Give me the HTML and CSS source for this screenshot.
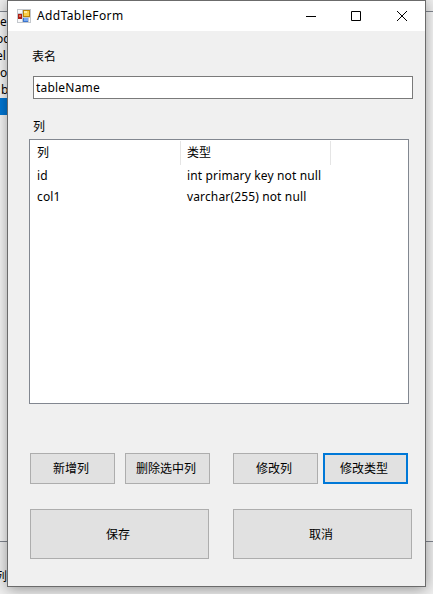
FILE: index.html
```
<!DOCTYPE html>
<html lang="zh-CN">
<head>
<meta charset="utf-8">
<title>AddTableForm</title>
<link rel="stylesheet" href="styles.css">
</head>
<body>
<div class="desktop">
  <div class="back-head"></div>
  <div class="back-body">
    <ul class="tree"><li>e</li><li class="outdent">oc</li><li class="outdent">el</li><li>o</li><li class="indent">b</li><li class="selected"></li></ul>
  </div>
  <div class="back-foot">列</div>
</div>
<main class="window">
  <header class="titlebar">
    <svg class="app-icon" width="14" height="14" viewBox="0 0 14 14" shape-rendering="crispEdges">
      <path fill="#c3c7cc" d="M0 0h14v14H0z"/>
      <path fill="#f7f8fa" d="M1 1h4v3H1zM1 10h4v3H1zM12 9h1v4h-1z"/>
      <path fill="#a91f16" d="M1 5h4v5H1z"/><path fill="#e46a57" d="M2 6h2v2H2z"/>
      <path fill="#ba8508" d="M6 1h7v7H6z"/><path fill="#f9cf47" d="M7 2h5v5H7z"/><path fill="#ffeaa0" d="M7 2h3v2H7z"/>
      <path fill="#3a74cd" d="M6 9h5v4H6z"/><path fill="#76a9f4" d="M7 9h4v3H7z"/>
    </svg>
    <h1 class="title">AddTableForm</h1>
    <svg class="controls" width="104" height="12" viewBox="0 0 104 12" fill="none" stroke="#000">
      <path d="M0 5.500h10M45.500 .5h9v9h-9z"/>
      <path d="M91 0l10 10M101 0l-10 10"/>
    </svg>
  </header>
  <form class="form">
    <label class="label" for="name">表名</label>
    <input class="name" id="name" value="tableName" spellcheck="false">
    <div class="label list-label">列</div>
    <div class="list">
      <div class="row head"><span>列</span><span>类型</span></div>
      <div class="row"><span>id</span><span>int primary key not null</span></div>
      <div class="row"><span>col1</span><span>varchar(255) not null</span></div>
    </div>
    <div class="actions">
      <button type="button">新增列</button>
      <button type="button">删除选中列</button>
      <button type="button">修改列</button>
      <button type="button" class="focused">修改类型</button>
    </div>
    <div class="submit">
      <button type="button">保存</button>
      <button type="button">取消</button>
    </div>
  </form>
</main>
</body>
</html>
```
FILE: styles.css
```
* { box-sizing: border-box; }
body {
  margin: 0;
  width: 433px;
  height: 594px;
  overflow: hidden;
  position: relative;
  color: #000;
  font: 12px/16px "Noto Sans", "Noto Sans CJK SC", sans-serif;
}
.desktop {
  position: absolute;
  inset: 0;
  display: flex;
  flex-direction: column;
  background: #f0f0f0;
}
.back-head { height: 12px; border-bottom: 1px solid #828790; }
.back-body { height: 530px; background: #f8f8f8; border-bottom: 1px solid #828790; }
.back-foot { flex: 1; padding-top: 27px; text-indent: -5px; }
.tree { width: 8px; margin: 0; padding: 1px 0 0; list-style: none; }
.tree li { height: 17px; line-height: 17px; white-space: nowrap; }
.tree .indent { text-indent: 1px; }
.tree .outdent { text-indent: -4px; }
.tree .selected { background: #0078d7; }
.window {
  position: relative;
  width: 419px;
  height: 587px;
  margin-left: 7px;
  border: 1px solid #6b6b6b;
  background: #f0f0f0;
  box-shadow: 0 2px 14px rgba(0, 0, 0, .4);
}
.titlebar {
  display: flex;
  align-items: center;
  height: 30px;
  padding: 0 13px 0 9px;
  background: #fff;
}
.title { margin: 0 auto 0 6px; font-size: 12px; font-weight: 400; letter-spacing: .4px; }
.controls { margin-top: 1px; margin-right: 2px; }
.form { padding: 18px 12px 0 21px; }
.label { display: block; padding-left: 3px; }
.name {
  display: block;
  width: 380px;
  height: 23px;
  margin: 11px 0 0 4px;
  padding: 0 2px;
  border: 1px solid #7a7a7a;
  background: #fff;
  color: #000;
  font: inherit;
  letter-spacing: .2px;
  outline: 0;
}
.list-label { margin-top: 20px; padding-left: 4px; }
.list {
  width: 380px;
  height: 265px;
  margin-top: 4px;
  padding-top: 1px;
  border: 1px solid #828790;
  background: #fff;
}
.row { display: grid; grid-template-columns: 151px 150px; height: 21px; line-height: 21px; letter-spacing: .14px; }
.row span { padding-left: 7px; white-space: nowrap; }
.row span + span { padding-left: 6px; }
.head { height: 24px; line-height: 24px; letter-spacing: 0; }
.head span { border-right: 1px solid #e5e5e5; }
.actions, .submit { display: grid; margin-left: 1px; }
.actions { grid-template-columns: 85px 85px 85px 85px; column-gap: 10px; height: 31px; margin-top: 49px; }
.actions button:nth-child(3) { margin-left: 13px; margin-right: -13px; }
.actions button:nth-child(4) { margin-left: 8px; margin-right: -8px; }
.submit { grid-template-columns: 179px 179px; column-gap: 24px; height: 50px; margin-top: 25px; }
button {
  padding: 1px 3px 0 0;
  border: 1px solid #adadad;
  background: #e1e1e1;
  color: #000;
  font: inherit;
}
.focused { border: 2px solid #0078d7; }
```
